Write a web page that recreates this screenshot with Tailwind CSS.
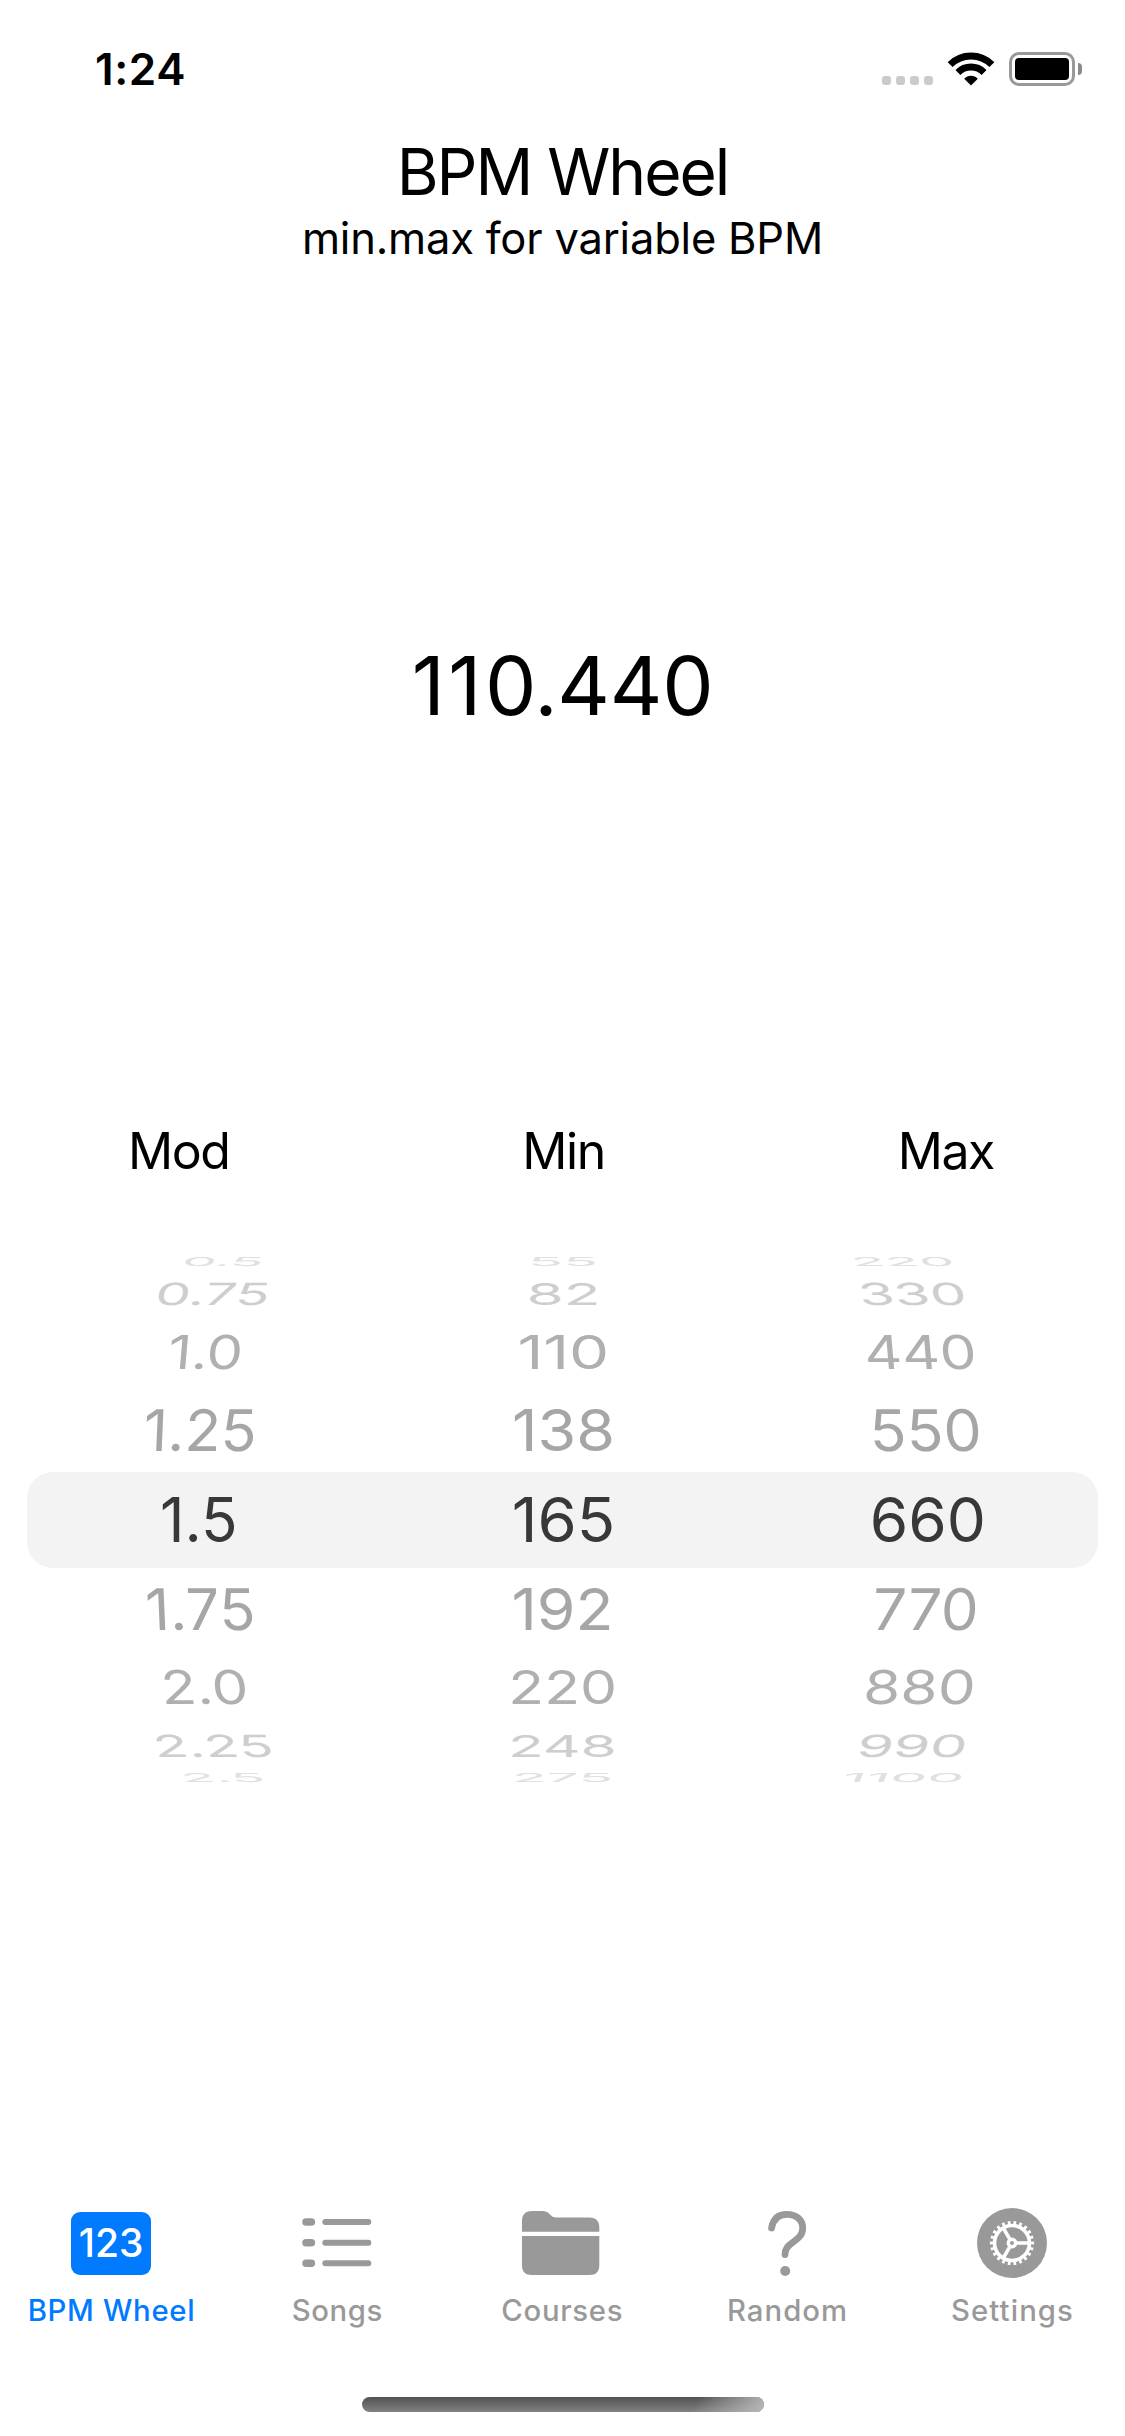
<!DOCTYPE html>
<html lang="en">
<head>
<meta charset="utf-8">
<title>BPM Wheel</title>
<script src="https://cdn.jsdelivr.net/npm/@tailwindcss/browser@4"></script>
</head>
<body class="bg-white">
<div class="flex h-[2436px] w-[1125px] flex-col overflow-hidden bg-white font-[Inter,sans-serif] text-black">

  <!-- Status bar -->
  <header class="flex h-[138px] items-center justify-between pl-[95px] pr-[43px]">
    <div class="text-[44px] leading-[52px] font-semibold tracking-[0.6px]">1:24</div>
    <div class="flex items-center">
      <div class="mt-[23px] flex gap-[5px]">
        <i class="size-[9px] rounded-[3px] bg-[#cbcbcb]"></i>
        <i class="size-[9px] rounded-[3px] bg-[#cbcbcb]"></i>
        <i class="size-[9px] rounded-[3px] bg-[#cbcbcb]"></i>
        <i class="size-[9px] rounded-[3px] bg-[#cbcbcb]"></i>
      </div>
      <svg class="ml-[14px] h-[34px] w-[48px]" viewBox="0 0 48 34" fill="none" stroke="#000" stroke-width="7">
        <path d="M3.14 12.64a29.5 29.5 0 0 1 41.72 0"/>
        <path d="M10.92 20.42a18.5 18.5 0 0 1 26.16 0"/>
        <path d="M24 33.5l-6.8-6.8c3.6-4 10-4 13.6 0z" fill="#000" stroke="none"/>
      </svg>
      <div class="ml-[14px] flex h-[34px] w-[66px] rounded-[10px] border-[3px] border-[#999] p-[3px]">
        <div class="flex-1 rounded-[4px] bg-black"></div>
      </div>
      <div class="ml-[3px] h-[12px] w-[4px] rounded-r-[4px] bg-[#8a8a8a]"></div>
    </div>
  </header>

  <!-- Titles -->
  <h1 class="text-center text-[64px] leading-[67px] tracking-[-2px]">BPM Wheel</h1>
  <p class="text-center text-[43.5px] leading-[66px] tracking-[-0.2px]">min.max for variable BPM</p>

  <!-- Current value -->
  <section class="flex h-[830px] items-center justify-center pt-px text-[81.6px] tracking-[-0.3px]"><span><span class="tracking-[3.5px]">11</span>0.440</span></section>

  <!-- Column headings -->
  <div class="flex h-[101px] items-center justify-between pl-[128px] pr-[131px] text-[50px] tracking-[-1.4px]">
    <span>Mod</span><span>Min</span><span>Max</span>
  </div>

  <!-- Picker drum: every item is squashed and sheared by its angle on the wheel -->
  <section class="mt-[50px] flex flex-col text-[61.5px] leading-[62px]">
    <div class="grid h-[19px] grid-cols-[repeat(3,365px)] place-content-center place-items-center text-[#e0e0e0]">
      <span class="[transform:matrix(.887,0,-.08,.2,25.4,0)]">0.5</span>
      <span class="[transform:matrix(.934,0,0,.2,.5,0)]">55</span>
      <span class="[transform:matrix(.904,0,.08,.2,-25.4,0)]">220</span>
    </div>
    <div class="grid h-[45px] grid-cols-[repeat(3,365px)] place-content-center place-items-center text-[#cecece]">
      <span class="[transform:matrix(.91,0,-.1,.495,15,0)]">0.75</span>
      <span class="[transform:matrix(.98,0,0,.495,.8,0)]">82</span>
      <span class="[transform:matrix(.938,0,.1,.495,-15.1,0)]">330</span>
    </div>
    <div class="grid h-[72px] grid-cols-[repeat(3,365px)] place-content-center place-items-center text-[#b0b0b0]">
      <span class="[transform:matrix(.937,0,-.065,.76,7.6,0)]">1.0</span>
      <span class="[transform:matrix(1.034,0,0,.76,.9,0)]">110</span>
      <span class="[transform:matrix(.951,0,.065,.76,-6.9,0)]">440</span>
    </div>
    <div class="grid h-[84px] grid-cols-[repeat(3,365px)] place-content-center place-items-center text-[#a6a6a6]">
      <span class="[transform:matrix(.962,0,-.04,.935,2.5,0)]">1.25</span>
      <span class="[transform:matrix(1.02,0,0,.935,1,0)]">138</span>
      <span class="[transform:matrix(.99,0,.04,.935,-2.1,0)]">550</span>
    </div>
    <div class="mx-[27px] grid h-[96px] grid-cols-[repeat(3,365px)] place-content-center place-items-center rounded-[26px] bg-[#f3f3f3] text-[#383838]">
      <span class="[transform:matrix(.98,0,0,1,1.2,0)]">1.5</span>
      <span class="[transform:matrix(1.03,0,0,1,1.2,0)]">165</span>
      <span class="[transform:matrix(1.01,0,0,1,.4,0)]">660</span>
    </div>
    <div class="grid h-[84px] grid-cols-[repeat(3,365px)] place-content-center place-items-center text-[#a6a6a6]">
      <span class="[transform:matrix(.97,0,.04,.935,2.6,-.5)]">1.75</span>
      <span class="[transform:matrix(1.015,0,0,.935,.2,-.5)]">192</span>
      <span class="[transform:matrix(.975,0,-.04,.935,-1.7,-.5)]">770</span>
    </div>
    <div class="grid h-[72px] grid-cols-[repeat(3,365px)] place-content-center place-items-center text-[#b0b0b0]">
      <span class="[transform:matrix(.945,0,.065,.76,7.3,-.5)]">2.0</span>
      <span class="[transform:matrix(.955,0,0,.76,-.2,-.5)]">220</span>
      <span class="[transform:matrix(.975,0,-.065,.76,-7.7,-.5)]">880</span>
    </div>
    <div class="grid h-[45px] grid-cols-[repeat(3,365px)] place-content-center place-items-center text-[#cecece]">
      <span class="[transform:matrix(.92,0,.1,.495,16,-1)]">2.25</span>
      <span class="[transform:matrix(.953,0,0,.495,.2,-1)]">248</span>
      <span class="[transform:matrix(.956,0,-.1,.495,-15.2,-1)]">990</span>
    </div>
    <div class="grid h-[19px] grid-cols-[repeat(3,365px)] place-content-center place-items-center text-[#e0e0e0]">
      <span class="[transform:matrix(.913,0,.08,.2,24.8,-1)]">2.5</span>
      <span class="[transform:matrix(.925,0,0,.2,0,-1)]">275</span>
      <span class="[transform:matrix(.953,0,-.08,.2,-24.4,-1)]">1100</span>
    </div>
  </section>

  <!-- Tab bar -->
  <nav class="mt-[413px] -ml-px grid w-[1125px] grid-cols-5 text-[29.3px] leading-[56px] font-medium text-[#999]">
    <a class="flex flex-col items-center text-[#007aff]">
      <svg class="size-[82px]" viewBox="0 0 82 82">
        <rect x="0" y="11" width="80" height="63" rx="9" fill="#007aff"/>
        <text x="40.2" y="56.3" text-anchor="middle" class="text-[39px] font-medium" fill="#fff">123</text>
      </svg>
      <span class="tracking-[0.7px]">BPM Wheel</span>
    </a>
    <a class="flex flex-col items-center">
      <svg class="size-[82px]" viewBox="0 0 82 82" fill="none" stroke="#999" stroke-linecap="round">
        <path d="M10 21h5.400M10 41.700h5.400M10 62.300h5.400" stroke-width="7.500"/>
        <path d="M29.300 21h43M29.300 41.700h43M29.300 62.300h43" stroke-width="6"/>
      </svg>
      <span class="ml-[1.5px] tracking-[0.6px]">Songs</span>
    </a>
    <a class="flex flex-col items-center">
      <svg class="size-[82px]" viewBox="0 0 82 82" fill="#999">
        <path d="M1 30.700V20.200C1 13.700 4.500 10 10.500 10h11c3.200 0 4.800.8 7 2.900l1.700 1.700c1.600 1.500 2.600 1.900 4.600 1.900H68.500c6.500 0 9.800 3.500 9.800 9.700V30.700z"/>
        <path d="M1 35h77.300v29.500c0 6.200-3.300 9.500-9.500 9.500H10.500c-6.200 0-9.500-3.300-9.500-9.500z"/>
      </svg>
      <span class="ml-[1.500px] tracking-[0.7px]">Courses</span>
    </a>
    <a class="flex flex-col items-center">
      <svg class="size-[82px]" viewBox="0 0 82 82" fill="none">
        <path d="M25.600 27C27.100 18 32.300 13.400 40.800 13.400C50.300 13.400 56.700 18.900 56.700 26.900C56.700 33.700 52.800 37.200 47.300 41C41.800 44.800 39.100 47.700 39 53.500" stroke="#999" stroke-width="6.800" stroke-linecap="round"/>
        <circle cx="39.200" cy="70" r="5" fill="#999"/>
      </svg>
      <span class="ml-[2px] tracking-[1px]">Random</span>
    </a>
    <a class="flex flex-col items-center">
      <svg class="size-[82px]" viewBox="0 0 82 82" fill="none" stroke="#fff">
        <circle cx="41" cy="42" r="35" fill="#999" stroke="none"/>
        <circle cx="41" cy="42" r="17.500" stroke-width="3.600"/>
        <circle cx="41" cy="42" r="20.300" stroke-width="3.600" pathLength="44" stroke-dasharray=".95 1.050" stroke-dashoffset=".475"/>
        <path d="M44.500 42h13M39.200 38.900L32.800 27.800M39.200 45.100L32.800 56.200" stroke-width="3.600"/>
        <circle cx="41" cy="42" r="3.700" stroke-width="3.500"/>
      </svg>
      <span class="ml-[2px] tracking-[1.100px]">Settings</span>
    </a>
  </nav>

  <!-- Home indicator -->
  <div class="mx-auto mt-[58px] h-[15px] w-[402px] shrink-0 overflow-hidden rounded-full bg-linear-to-b from-[#525252] to-[#828282]">
    <div class="ml-auto h-full w-[90px] bg-linear-115 from-transparent from-25% to-[#b8b8b8]"></div>
  </div>
</div>
</body>
</html>
